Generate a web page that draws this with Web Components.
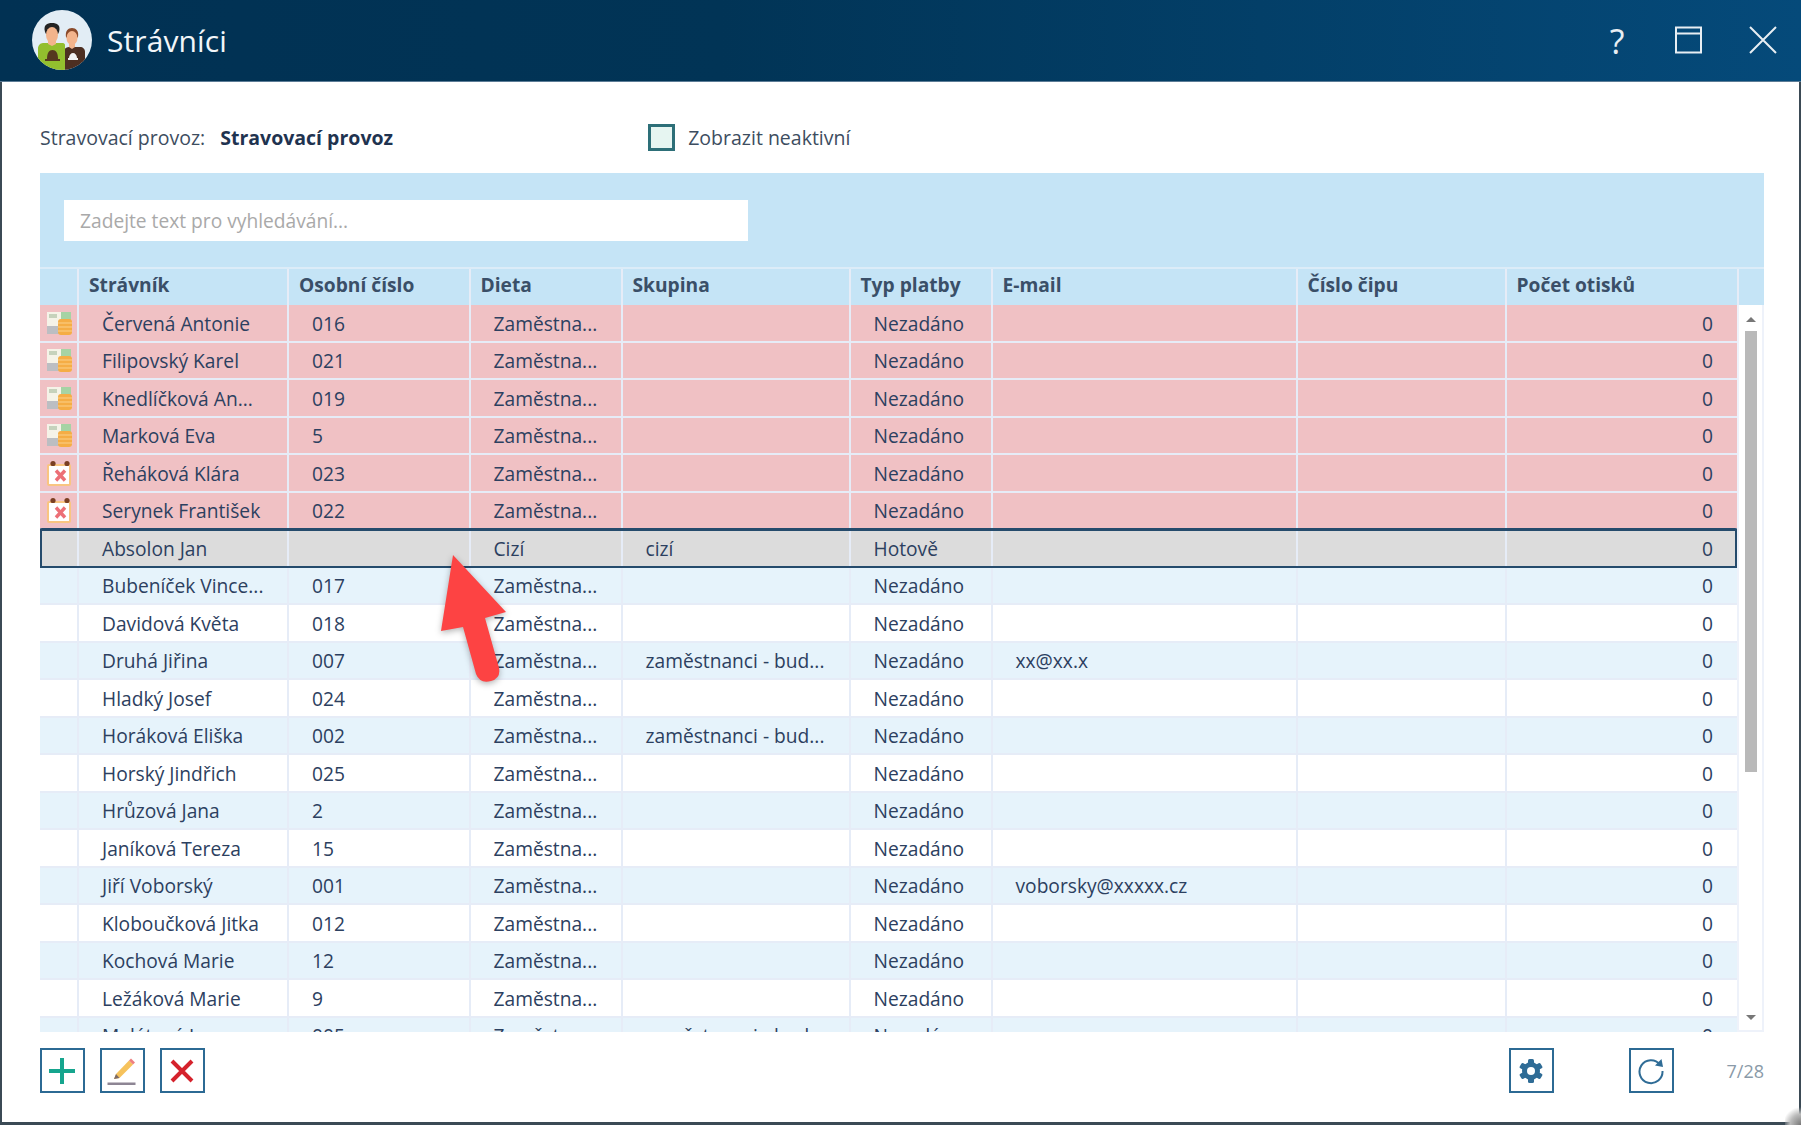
<!DOCTYPE html>
<html lang="cs">
<head>
<meta charset="utf-8">
<title>Strávníci</title>
<style>
  html, body { margin: 0; height: 100%; background: #fff; }
  body { font-family: "Open Sans", "Noto Sans", sans-serif; color: #2c4060; overflow: hidden; }
</style>
</head>
<body>
<app-window>
  <title-bar slot="title" caption="Strávníci"></title-bar>
  <filter-row></filter-row>
  <diner-grid></diner-grid>
  <action-bar slot="footer" position="7/28"></action-bar>
</app-window>

<script>
const ICONS = {
  money: `<svg width="26" height="26" viewBox="0 0 26 26">
    <rect x="1" y="2" width="16" height="15" fill="#f5f3e8"/>
    <rect x="15" y="2" width="10" height="10" fill="#a6d3a4"/>
    <rect x="3" y="4" width="8" height="4" fill="#c6d2bc"/>
    <rect x="1" y="16" width="12" height="8" fill="#bcbec2"/>
    <rect x="12" y="9" width="14" height="16" rx="3" fill="#f5ad45"/>
    <path d="M12 13h14M12 17h14M12 21h14" stroke="#fbd08a" stroke-width="1"/>
  </svg>`,
  calendar: `<svg width="26" height="26" viewBox="0 0 26 26">
    <rect x="2" y="5" width="22" height="20" rx="1" fill="#fff" stroke="#f9c581" stroke-width="2"/>
    <circle cx="7" cy="3.500" r="2.600" fill="#7a3f22"/>
    <circle cx="21" cy="3.500" r="2.600" fill="#7a3f22"/>
    <path d="M10 10.500l9 10M19 10.500l-9 10" stroke="#ec6f76" stroke-width="3.400"/>
  </svg>`
};

class AppWindow extends HTMLElement {
  constructor() {
    super();
    this.attachShadow({mode: 'open'}).innerHTML = `
      <style>
        :host { display: flex; flex-direction: column; box-sizing: border-box; width: 1801px; height: 1125px;
          border: solid #3b4a55; border-width: 0 2px 3px 2px; background: #fff; position: relative; }
        main { flex: 1; display: flex; flex-direction: column; padding: 0 35px 0 38px; min-height: 0; }
        .grip { position: absolute; right: -2px; bottom: -3px; width: 16px; height: 18px;
          background: radial-gradient(circle at 100% 100%, #777 0, #bbb 45%, transparent 75%); }
      </style>
      <slot name="title"></slot>
      <main><slot></slot><slot name="footer"></slot></main>
      <div class="grip"></div>
    `;
  }
}

class TitleBar extends HTMLElement {
  constructor() {
    super();
    this.attachShadow({mode: 'open'});
  }

  connectedCallback() {
    this.shadowRoot.innerHTML = `
      <style>
        :host { display: flex; align-items: center; height: 82px; flex: none; box-sizing: border-box;
          margin: 0 -2px; padding: 0 24px 0 32px;
          background: linear-gradient(90deg, #013153 0%, #013456 40%, #054a7a 100%);
          border-bottom: 1px solid #5c7c96; color: #fff; }
        .name { font-size: 30px; margin-left: 15px; flex: 1; color: #f2f6f9; letter-spacing: .1px; }
        .tools { display: flex; align-items: center; }
        .help { font-size: 34px; width: 40px; text-align: center; line-height: 40px; color: #e8eef3; margin-right: 38px; }
        svg { display: block; }
      </style>
      <svg width="60" height="60" viewBox="0 0 60 60" style="margin-top:-1px">
        <defs><clipPath id="round"><circle cx="30" cy="30" r="30"/></clipPath></defs>
        <g clip-path="url(#round)">
          <rect width="60" height="60" fill="#e2edf5"/>
          <path d="M33 60V39c0-1 2-2 4-2h11c3 0 5 2 5 5v18z" fill="#4d2f22"/>
          <path d="M6 60V38c0-2 2-5 5-5h20c1 0 2 1 2 2v25z" fill="#92bf2e"/>
          <path d="M13 22c-2-7 2-9 7-9s9 2 7 9l-1 2H14z" fill="#232323"/>
          <ellipse cx="20" cy="25" rx="6" ry="8" fill="#f3b48c"/>
          <path d="M16 30h8v4l-4 2-4-2z" fill="#f3b48c"/>
          <path d="M34 27c-1-6 2-9 6-9s7 3 6 9l-1 1H35z" fill="#8a4a2a"/>
          <ellipse cx="40" cy="28" rx="5.500" ry="7" fill="#f3b48c"/>
          <path d="M37 32h6v5l-3 2-3-2z" fill="#f3b48c"/>
          <path d="M15 49c0-6 2-9 5.500-9s5.500 3 5.500 9z" fill="#55391f"/>
          <rect x="13" y="49" width="15" height="2" fill="#55391f"/>
          <path d="M37 48c0-3 2-5 4-5s4 2 4 5z" fill="#f2f2f2"/>
          <rect x="36" y="48" width="10" height="2" fill="#f2f2f2"/>
        </g>
      </svg>
      <span class="name">${this.getAttribute('caption')}</span>
      <div class="tools">
        <span class="help">?</span>
        <svg width="28" height="28" viewBox="0 0 28 28" fill="none" stroke="#e8eef3" stroke-width="2" style="margin:-2px 46px 0 0">
          <rect x="1" y="1.500" width="25" height="25"/><path d="M1 7.500h25"/>
        </svg>
        <svg width="28" height="28" viewBox="0 0 28 28" fill="none" stroke="#e8eef3" stroke-width="2" style="margin-top:-2px">
          <path d="M1 1l26 26M27 1L1 27"/>
        </svg>
      </div>
    `;
  }
}

class FilterRow extends HTMLElement {
  constructor() {
    super();
    this.attachShadow({mode: 'open'}).innerHTML = `
      <style>
        :host { display: flex; align-items: center; height: 91px; box-sizing: border-box; padding-top: 20px; flex: none; font-size: 19.500px; color: #3d4d60; }
        b { margin-left: 15px; color: #1f3350; width: 428px; }
        i { box-sizing: border-box; width: 27px; height: 27px; border: 3px solid #2d6f78; background: #e6f5f1; margin-right: 13px; }
      </style>
      <span>Stravovací provoz:</span><b>Stravovací provoz</b>
      <i></i><span>Zobrazit neaktivní</span>
    `;
  }
}

class GridRow extends HTMLElement {
  constructor() {
    super();
    this.attachShadow({mode: 'open'});
  }

  set data(row) {
    const num = row.cells.length - 1;
    this.setAttribute('kind', row.kind);
    this.shadowRoot.innerHTML = `
      <style>
        :host { display: grid; grid-template-columns: var(--cols); height: 37.5px; box-sizing: border-box;
          border-bottom: 2px solid #e6ecf7; background: #fff; font-size: 19.200px; color: #2c4060; position: relative; }
        :host([kind=red]) { background: #f0c1c4; }
        :host([kind=alt]) { background: #e6f3fb; }
        :host([kind=selected]) { background: #dcdcdc; }
        :host([kind=selected])::after { content: ""; position: absolute; inset: -2px -1px -3px -1px;
          border: 3px solid #254b6c; border-radius: 3px; }
        div { border-left: 2px solid #e6ecf7; padding: 1px 0 0 23px; white-space: nowrap; overflow: hidden;
          display: flex; align-items: center; box-sizing: border-box; }
        div.ico { border-left: 0; padding: 0 0 0 6px; }
        div.num { justify-content: flex-end; padding: 1px 24px 0 0; }
        svg { display: block; }
      </style>
      <div class="ico">${row.icon ? ICONS[row.icon] : ''}</div>
      ${row.cells.map((c, i) => `<div class="${i === num ? 'num' : ''}">${c}</div>`).join('')}
    `;
  }
}

class DinerGrid extends HTMLElement {
  constructor() {
    super();
    this.attachShadow({mode: 'open'});
  }

  connectedCallback() {
    const heads = ['Strávník', 'Osobní číslo', 'Dieta', 'Skupina', 'Typ platby', 'E-mail', 'Číslo čipu', 'Počet otisků'];
    this.shadowRoot.innerHTML = `
      <style>
        :host { display: block; flex: none; height: 859px; box-sizing: border-box; width: 1724px;
          --cols: 37px 210px 181.500px 152px 228px 142px 305px 209px 232.500px; position: relative; }
        .search { height: 94px; box-sizing: border-box; background: #c5e4f6; padding: 27px 0 0 24px; }
        .search span { display: flex; align-items: center; box-sizing: border-box; width: 684px; height: 41px; background: #fff;
          padding-left: 16px; font-size: 19.200px; color: #a9a9a9; }
        .head { display: grid; grid-template-columns: var(--cols) 27px; height: 38px; background: #c5e4f6;
          border-top: 2px solid #dcecf8; box-sizing: border-box; font-size: 19.200px; font-weight: 700; color: #3a4f68; }
        .head div { border-left: 2px solid #e6ecf7; padding: 0 0 6px 10px; display: flex; align-items: center; box-sizing: border-box; }
        .head div:first-child { border-left: 0; }
        .body { display: flex; height: 727px; overflow: hidden; }
        .rows { width: 1697px; flex: none; }
        .bar { flex: 1; position: relative; background: #fff; border: solid #eef2fa; border-width: 0 2px 2px 2px; }
        .bar .thumb { position: absolute; left: 6px; top: 26px; width: 12px; height: 441px; background: #b9b9b9; }
        .bar .up, .bar .down { position: absolute; left: 7px; width: 0; height: 0; border: 5px solid transparent; }
        .bar .up { top: 7px; border-bottom: 5px solid #777; }
        .bar .down { bottom: 5px; border-top: 5px solid #777; }
      </style>
      <div class="search"><span>Zadejte text pro vyhledávání...</span></div>
      <div class="head"><div></div>${heads.map(h => `<div>${h}</div>`).join('')}<div></div></div>
      <div class="body">
        <div class="rows"></div>
        <div class="bar"><span class="up"></span><span class="thumb"></span><span class="down"></span></div>
      </div>
      <pointer-arrow></pointer-arrow>
    `;
    const Z = 'Zaměstna...', N = 'Nezadáno', G = 'zaměstnanci - bud...';
    const data = [
      ['red', 'money', 'Červená Antonie', '016', Z, '', N, ''],
      ['red', 'money', 'Filipovský Karel', '021', Z, '', N, ''],
      ['red', 'money', 'Knedlíčková An...', '019', Z, '', N, ''],
      ['red', 'money', 'Marková Eva', '5', Z, '', N, ''],
      ['red', 'calendar', 'Řeháková Klára', '023', Z, '', N, ''],
      ['red', 'calendar', 'Serynek František', '022', Z, '', N, ''],
      ['selected', '', 'Absolon Jan', '', 'Cizí', 'cizí', 'Hotově', ''],
      ['alt', '', 'Bubeníček Vince...', '017', Z, '', N, ''],
      ['', '', 'Davidová Květa', '018', Z, '', N, ''],
      ['alt', '', 'Druhá Jiřina', '007', Z, G, N, 'xx@xx.x'],
      ['', '', 'Hladký Josef', '024', Z, '', N, ''],
      ['alt', '', 'Horáková Eliška', '002', Z, G, N, ''],
      ['', '', 'Horský Jindřich', '025', Z, '', N, ''],
      ['alt', '', 'Hrůzová Jana', '2', Z, '', N, ''],
      ['', '', 'Janíková Tereza', '15', Z, '', N, ''],
      ['alt', '', 'Jiří Voborský', '001', Z, '', N, 'voborsky@xxxxx.cz'],
      ['', '', 'Kloboučková Jitka', '012', Z, '', N, ''],
      ['alt', '', 'Kochová Marie', '12', Z, '', N, ''],
      ['', '', 'Ležáková Marie', '9', Z, '', N, ''],
      ['alt', '', 'Malátová Jana', '005', Z, G, N, '']
    ];
    const rows = this.shadowRoot.querySelector('.rows');
    data.forEach(d => {
      const row = document.createElement('grid-row');
      rows.appendChild(row);
      row.data = { kind: d[0], icon: d[1], cells: [...d.slice(2), '', '0'] };
    });
  }
}

class PointerArrow extends HTMLElement {
  constructor() {
    super();
    this.attachShadow({mode: 'open'}).innerHTML = `
      <style>
        :host { position: absolute; left: 393px; top: 376px; width: 80px; height: 140px; display: block; pointer-events: none; }
        svg { display: block; overflow: visible; filter: drop-shadow(0 2px 3px rgba(0,0,0,.3)); }
      </style>
      <svg width="80" height="140" viewBox="0 0 80 140">
        <path d="M20 6 L73 63 L52 69 L66 119 Q68 129 58 132 Q47 135 43 125 L30 78 L8 82 Z" fill="#fd4343"/>
      </svg>
    `;
  }
}

class ActionBar extends HTMLElement {
  constructor() {
    super();
    this.attachShadow({mode: 'open'});
  }

  connectedCallback() {
    this.shadowRoot.innerHTML = `
      <style>
        :host { display: flex; align-items: center; height: 45px; margin: 16px 0 0 -0.500px; flex: none; width: 1724.500px; }
        button { box-sizing: border-box; width: 45px; height: 45px; padding: 0; border: 2px solid #2c6a94; background: #fff;
          display: flex; align-items: center; justify-content: center; margin-right: 15px; }
        .gap { flex: 1; }
        .pos { color: #8a9aa8; font-size: 18px; margin-left: 53px; }
        .right { margin-right: 75px; }
        .last { margin-right: 0; }
      </style>
      <button title="Přidat"><svg width="28" height="28" viewBox="0 0 28 28"><path d="M14 1v26M1 14h26" stroke="#16a58e" stroke-width="4"/></svg></button>
      <button title="Upravit"><svg width="32" height="32" viewBox="0 0 32 32">
        <path d="M8 24 L10 19 L23 5.500 L27 9.500 L13.500 23 Z" fill="#f6c25c"/>
        <path d="M23 5.500l2-2 4 4-2 2z" fill="#ee7f80"/>
        <path d="M8 24l2-5 3.500 4z" fill="#7a6a6a"/>
        <rect x="1.500" y="27.500" width="28" height="2.500" fill="#8d8594"/>
      </svg></button>
      <button title="Smazat"><svg width="26" height="26" viewBox="0 0 26 26"><path d="M3 3l20 20M23 3L3 23" stroke="#d5222c" stroke-width="4"/></svg></button>
      <span class="gap"></span>
      <button class="right" title="Nastavení"><svg width="26" height="26" viewBox="0 0 26 26">
        <g fill="#2f6c96">
          <rect x="10" y="1" width="6" height="24" rx="1.500"/>
          <rect x="10" y="1" width="6" height="24" rx="1.500" transform="rotate(60 13 13)"/>
          <rect x="10" y="1" width="6" height="24" rx="1.500" transform="rotate(120 13 13)"/>
        </g>
        <circle cx="13" cy="13" r="6.500" fill="none" stroke="#2f6c96" stroke-width="5"/>
        <circle cx="13" cy="13" r="4" fill="#fff"/>
      </svg></button>
      <button class="last" title="Obnovit"><svg width="28" height="28" viewBox="0 0 28 28" fill="none">
        <path d="M23 7.500A11.500 11.500 0 1 0 25.500 14" stroke="#2f6c96" stroke-width="2"/>
        <path d="M18 8.500l8 1.500-1.500-8z" fill="#2f6c96"/>
      </svg></button>
      <span class="pos">${this.getAttribute('position')}</span>
    `;
  }
}

customElements.define('app-window', AppWindow);
customElements.define('title-bar', TitleBar);
customElements.define('filter-row', FilterRow);
customElements.define('grid-row', GridRow);
customElements.define('pointer-arrow', PointerArrow);
customElements.define('diner-grid', DinerGrid);
customElements.define('action-bar', ActionBar);
</script>
</body>
</html>
